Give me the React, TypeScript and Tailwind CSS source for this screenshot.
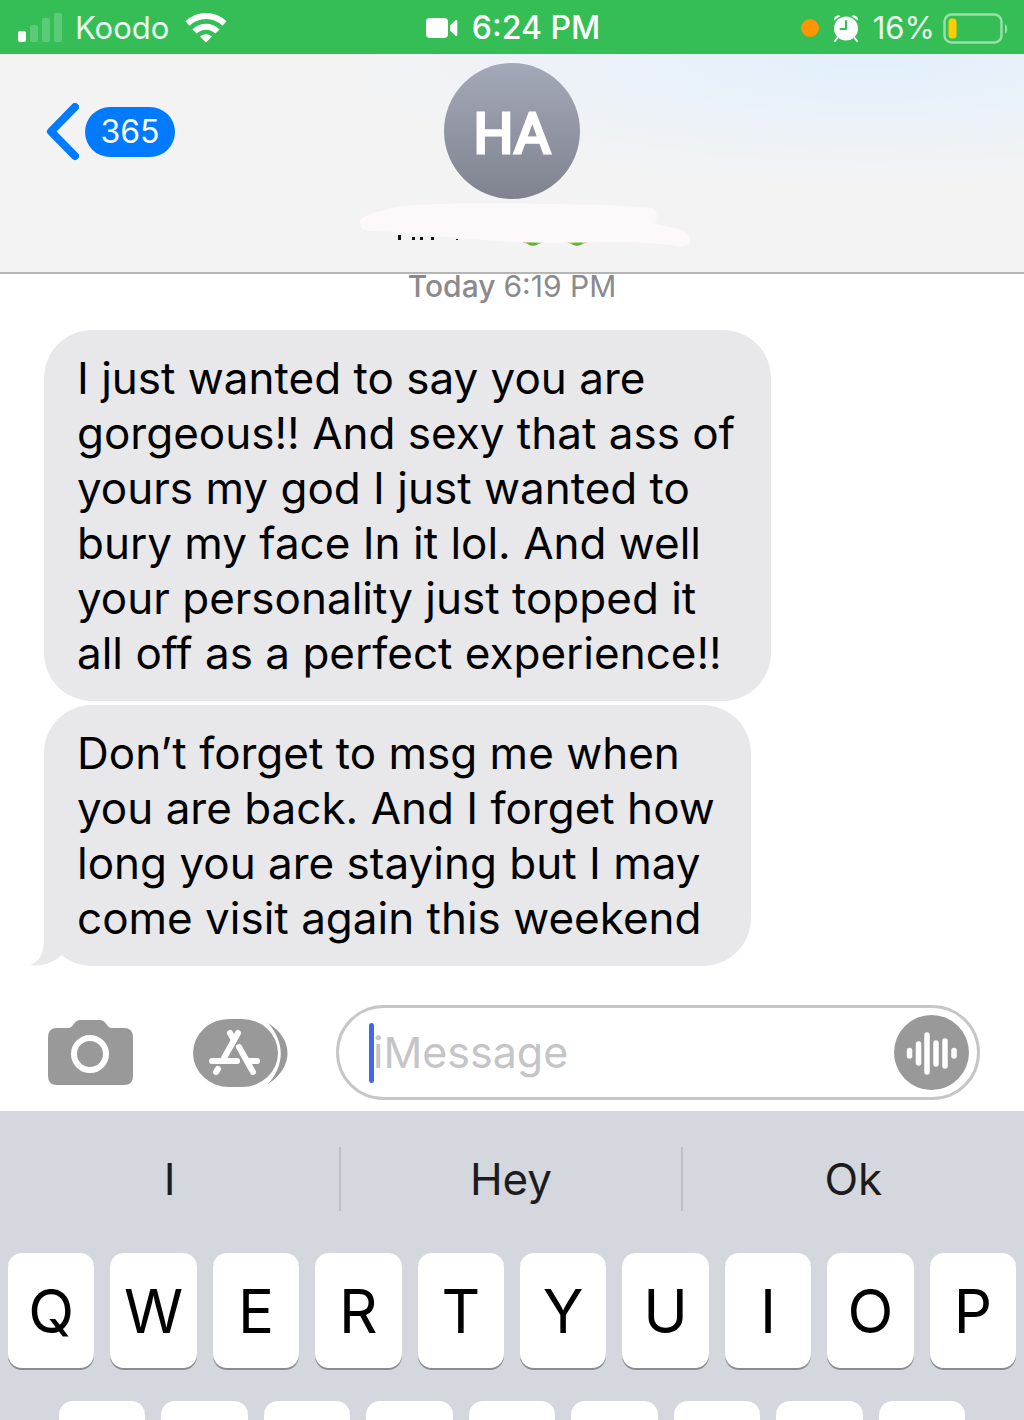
import React from 'react';

const messages = [
  {
    id: 1,
    lines: [
      'I just wanted to say you are',
      'gorgeous!! And sexy that ass of',
      'yours my god I just wanted to',
      'bury my face In it lol. And well',
      'your personality just topped it',
      'all off as a perfect experience!!',
    ],
  },
  {
    id: 2,
    lines: [
      'Don’t forget to msg me when',
      'you are back. And I forget how',
      'long you are staying but I may',
      'come visit again this weekend',
    ],
  },
];

const suggestions = ['I', 'Hey', 'Ok'];
const topRow = ['Q', 'W', 'E', 'R', 'T', 'Y', 'U', 'I', 'O', 'P'];
const middleRow = ['A', 'S', 'D', 'F', 'G', 'H', 'J', 'K', 'L'];

function StatusBar() {
  return (
    <div className="grid h-[54px] shrink-0 grid-cols-[1fr_auto_1fr] items-center bg-[#34be55] pt-0.5 pr-4 pl-[18px] text-[31px] leading-8 text-white/90">
      <div className="flex items-center gap-3">
        {/* Signal */}
        <svg width="45" height="30" viewBox="0 0 45 30" fill="#fff">
          <rect x="0" y="18" width="8" height="11" rx="2" />
          <rect x="12" y="12" width="8" height="17" rx="2" opacity="0.2" />
          <rect x="24" y="5" width="8" height="24" rx="2" opacity="0.2" />
          <rect x="36" y="0" width="8" height="29" rx="2" opacity="0.2" />
        </svg>
        <span>Koodo</span>
        {/* Wi-Fi */}
        <svg className="ml-1" width="42" height="30" viewBox="0 0 42 30" fill="none" stroke="#fff" strokeWidth="6">
          <path d="M2.500 10.500C13 0.500 29 0.500 39.500 10.500" />
          <path d="M9.500 18.500C16 12 26 12 32.500 18.500" />
          <path d="M21 29.500l-6-6c3.500-3 8.500-3 12 0z" fill="#fff" stroke="none" />
        </svg>
      </div>

      <div className="flex items-center gap-3.5 font-medium text-white">
        <svg width="32" height="20" viewBox="0 0 32 20" fill="#fff">
          <rect width="22" height="20" rx="4" />
          <path d="M24 7.500l5.500-5.200c.8-.8 1.800-.4 1.800.7v14c0 1.100-1 1.500-1.800.7L24 12.500z" />
        </svg>
        <span className="text-[32px]">6:24 PM</span>
      </div>

      <div className="flex items-center justify-end">
        <span className="mr-3.5 size-[18px] rounded-full bg-[#ff9500]" />
        {/* Alarm */}
        <svg className="mr-3.5" width="26" height="28" viewBox="0 0 26 28" fill="none">
          <path d="M1 6.500C.5 3 4 .5 7.500 2z" fill="#fff" />
          <path d="M25 6.500C25.500 3 22 .5 18.500 2z" fill="#fff" />
          <path d="M5 23l-3 4M21 23l3 4" stroke="#fff" strokeWidth="2" strokeLinecap="round" />
          <circle cx="13" cy="14.500" r="12" fill="#fff" />
          <path d="M13 7v8H7.500" stroke="#34be55" strokeWidth="2" strokeLinecap="round" strokeLinejoin="round" />
        </svg>
        <span className="mr-2">16%</span>
        {/* Battery */}
        <svg width="65" height="31" viewBox="0 0 65 31">
          <rect x="1.500" y="1.500" width="57" height="28" rx="7" fill="none" stroke="#fff" strokeOpacity="0.5" strokeWidth="2.500" />
          <rect x="5.500" y="5.500" width="8" height="20" rx="3.500" fill="#ffcc00" />
          <path d="M62 11c3 1.500 3 8 0 9.500z" fill="#fff" opacity="0.5" />
        </svg>
      </div>
    </div>
  );
}

function Header() {
  return (
    <header className="grid h-[220px] shrink-0 grid-cols-[1fr_auto_1fr] items-start border-b-2 border-[#b5b5b7] bg-[#f3f3f4] bg-[radial-gradient(ellipse_at_85%_0%,#e2f0fc_0%,#f3f3f4_42%)] pt-[9px]">
      <a href="#conversations" className="mt-10 ml-[45px] flex items-center gap-1.5 justify-self-start">
        <svg width="34" height="58" viewBox="0 0 34 58" fill="none" stroke="#007aff" strokeWidth="8" strokeLinecap="round" strokeLinejoin="round">
          <path d="M30 4L6 28.500L30 53" />
        </svg>
        <span className="flex h-[50px] w-[90px] items-center justify-center rounded-full bg-[#007aff] text-[32px] text-white">365</span>
      </a>

      <div className="flex w-[334px] flex-col items-center justify-self-center">
        <div className="flex size-[136px] items-center justify-center rounded-full bg-linear-to-b from-[#a4a9b9] to-[#80838f] pt-1.5 font-['Roboto',sans-serif] text-[56px] text-white [-webkit-text-stroke:3px_white]">
          HA
        </div>
        {/* Scribbled-out contact name */}
        <svg className="ml-7" width="334" height="50" viewBox="0 0 334 50">
          <path d="M167 43h14c-3 5-11 5-14 0z" fill="#5cb52c" />
          <path d="M211 43h14c-3 5-11 5-14 0z" fill="#5cb52c" />
          <path d="M164 43l6 2M184 43l-6 2M208 43l6 2M228 43l-6 2" stroke="#e39a4c" />
          <path
            d="M1 22C6 14 22 13 37 8C78 3 142 4 179 5C220 5 257 6 292 9C300 13 298 18 296 25C310 28 330 30 331 39C332 49 322 48 312 46C294 44 279 43 250 43C216 44 181 44 150 43C121 40 83 38 40 34C24 31 8 34 2 29Z"
            fill="#fdf8fa"
          />
          <g fill="#111">
            <rect x="39" y="36" width="3" height="5" />
            <rect x="53" y="38" width="3" height="3" />
            <rect x="61" y="38" width="3" height="3" />
            <rect x="72" y="38" width="3" height="3" />
            <rect x="97" y="40" width="2" height="1" />
          </g>
        </svg>
      </div>
    </header>
  );
}

function Conversation() {
  return (
    <main className="shrink-0 bg-white">
      <p className="flex h-14 items-start justify-center gap-2 text-[30px] leading-6 text-[#8a8a8d]">
        <span className="font-medium">Today</span>
        <span>6:19 PM</span>
      </p>
      <div className="flex flex-col items-start gap-1 pl-11">
        {messages.map((message, idx) => (
          <div key={message.id} className="relative rounded-[48px] bg-[#e8e8ea] pt-[21px] pr-9 pb-5 pl-[33px] text-[44px] leading-[55px] text-black">
            {message.lines.map((line) => (
              <p key={line} className="whitespace-nowrap">{line}</p>
            ))}
            {/* Tail on the last bubble */}
            {idx === messages.length - 1 && (
              <svg className="absolute bottom-0 -left-3.5" width="50" height="50" viewBox="0 0 50 50">
                <path d="M14 0V24C14 36 10 46 0 49C12 51 24 46 32 39L40 30V0Z" fill="#e8e8ea" />
              </svg>
            )}
          </div>
        ))}
      </div>
    </main>
  );
}

function Composer() {
  return (
    <form className="flex h-[145px] shrink-0 items-center bg-white pt-7 pr-11 pl-12" onSubmit={(e) => e.preventDefault()}>
      <button type="button" aria-label="Camera" className="mr-[60px]">
        <svg width="85" height="66" viewBox="0 0 85 66">
          <path d="M9 8H20C26 8 25 0 33 0H51C59 0 58 8 64 8H76Q85 8 85 17V56Q85 65 76 65H9Q0 65 0 56V17Q0 8 9 8Z" fill="#999" />
          <circle cx="42" cy="34" r="16" fill="none" stroke="#fff" strokeWidth="6" />
        </svg>
      </button>
      <button type="button" aria-label="Apps" className="mr-12">
        <svg width="95" height="68" viewBox="0 0 95 68">
          <path d="M75 4C101 20 101 48 75 65C92 46 92 23 75 4Z" fill="#999" />
          <rect width="85" height="68" rx="36" fill="#999" />
          <g stroke="#fff" strokeWidth="6" strokeLinecap="round" fill="none">
            <path d="M45 14L31 39" />
            <path d="M37 14L41 21" />
            <path d="M46 28L60 53" />
            <path d="M19 42H44" />
            <path d="M56 42H64" />
            <path d="M25 50L23 53" />
          </g>
        </svg>
      </button>
      <div className="relative flex h-[95px] min-w-0 flex-1 items-center rounded-full border-3 border-[#c6c6c6] pr-2 pl-[34px]">
        <input
          aria-label="iMessage"
          placeholder="iMessage"
          className="min-w-0 flex-1 bg-transparent text-[43px] text-black outline-none placeholder:text-[#c5c5c7]"
        />
        {/* Caret */}
        <span className="absolute left-[30px] h-[60px] w-[5px] rounded-sm bg-[#4169e8]" />
        <button type="button" aria-label="Record audio">
          <svg width="75" height="75" viewBox="0 0 75 75">
            <circle cx="37.500" cy="37.500" r="37.500" fill="#999" />
            <g stroke="#fff" strokeWidth="5.500" strokeLinecap="round">
              <path d="M15.500 35.500V41" />
              <path d="M24.500 29V48" />
              <path d="M33 20V57" />
              <path d="M42 28V49" />
              <path d="M51 26V51" />
              <path d="M60 35.500V41" />
            </g>
          </svg>
        </button>
      </div>
    </form>
  );
}

function Key({ label, children }: { label: string; children?: React.ReactNode }) {
  return (
    <button
      type="button"
      aria-label={label}
      className="h-[115px] min-w-0 flex-1 rounded-[14px] bg-white text-[60px] leading-none text-black shadow-[0_2px_0_#8b8c90]"
    >
      {children}
    </button>
  );
}

function Keyboard() {
  return (
    <div className="flex-1 bg-[#d4d7dd]">
      <div className="grid h-[142px] grid-cols-3 items-center pb-1.5">
        {suggestions.map((word) => (
          <button key={word} type="button" className="h-16 border-r-2 border-[#bcbfc4] text-[44px] leading-none text-[#1c1c1e] last:border-r-0">
            {word}
          </button>
        ))}
      </div>
      <div className="flex gap-4 px-2">
        {topRow.map((letter) => (
          <Key key={letter} label={letter}>{letter}</Key>
        ))}
      </div>
      {/* Only the top edge of this row is in view */}
      <div className="mt-[33px] flex gap-4 px-[59px]">
        {middleRow.map((letter) => (
          <Key key={letter} label={letter} />
        ))}
      </div>
    </div>
  );
}

export default function App() {
  return (
    <div className="flex h-screen flex-col overflow-hidden bg-white font-['Inter','Liberation_Sans',sans-serif]">
      <StatusBar />
      <Header />
      <Conversation />
      <Composer />
      <Keyboard />
    </div>
  );
}
